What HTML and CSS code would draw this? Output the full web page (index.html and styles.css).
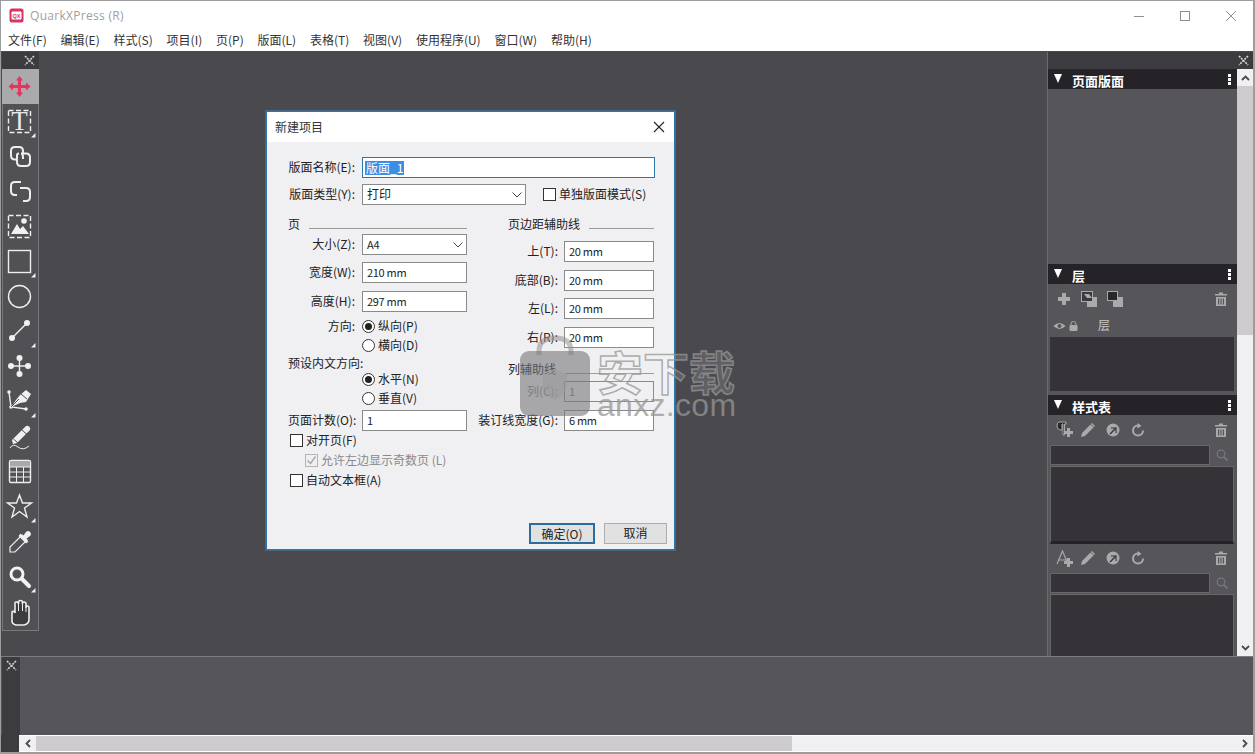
FILE: index.html
```html
<!DOCTYPE html>
<html lang="zh">
<head>
<meta charset="utf-8">
<title>QuarkXPress (R)</title>
<link rel="stylesheet" href="styles.css">
</head>
<body>
<div class="window">
  <header class="titlebar">
    <svg class="applogo" width="15" height="15" viewBox="0 0 15 15"><rect x="0.5" y="0.5" width="14" height="14" rx="2.500" fill="#dc3263"/><rect x="2.500" y="3.500" width="10" height="8" rx="1" fill="#fff"/><text x="7.500" y="9.800" class="logotext">QX</text></svg>
    <span class="apptitle">QuarkXPress (R)</span>
    <div class="winbtns">
      <svg width="12" height="12" viewBox="0 0 12 12"><path d="M1 6.500H11" class="winstroke"/></svg>
      <svg width="12" height="12" viewBox="0 0 12 12"><rect x="1.500" y="1.500" width="9" height="9" class="winstroke"/></svg>
      <svg width="12" height="12" viewBox="0 0 12 12"><path d="M1 1L11 11M11 1L1 11" class="winstroke"/></svg>
    </div>
  </header>
  <nav class="menubar">
    <span>文件(F)</span><span>编辑(E)</span><span>样式(S)</span><span>项目(I)</span><span>页(P)</span><span>版面(L)</span><span>表格(T)</span><span>视图(V)</span><span>使用程序(U)</span><span>窗口(W)</span><span>帮助(H)</span>
  </nav>

  <main class="workarea">
    <aside class="toolbox">
      <div class="toolhead"><svg class="closex" width="11" height="11" viewBox="0 0 11 11"><path d="M1 1L10 10M10 1L1 10"/></svg></div>
      <div class="tool tool-active"><svg width="37" height="35" viewBox="0 0 37 35"><path d="M17.500 7L21 11.500H19V16H24V13.500L28.500 17.500L24 21.500V19H19V23.500H21L17.500 28L14 23.500H16V19H11V21.500L6.500 17.500L11 13.500V16H16V11.500H14Z" fill="#e0365f"/></svg></div>
      <div class="tool"><svg width="37" height="35" viewBox="0 0 37 35"><rect x="6.500" y="6.500" width="22" height="22" class="ts dash"/><text x="17.500" y="26" class="ticon">T</text><path d="M29 33.500H33.500V29Z" class="tf"/></svg></div>
      <div class="tool"><svg width="37" height="35" viewBox="0 0 37 35"><path d="M14 20.500H13Q9 20.500 9 16.500V12Q9 8 13 8H17Q21 8 21 12V14" class="ts2"/><path d="M21 20V18.500Q21 14.500 19 14.500H24Q28 14.500 28 18.500V23Q28 27 24 27H19Q15 27 15 23V16Q15 14.500 17 14.500" class="ts2"/></svg></div>
      <div class="tool"><svg width="37" height="35" viewBox="0 0 37 35"><path d="M19 8H13Q9 8 9 12V17Q9 21 13 21H15" class="ts2"/><path d="M18 14H24Q28 14 28 18V23Q28 27 24 27H21" class="ts2"/></svg></div>
      <div class="tool"><svg width="37" height="35" viewBox="0 0 37 35"><rect x="6.500" y="6.500" width="22" height="22" class="ts dash"/><circle cx="22" cy="12" r="2.800" class="tf"/><path d="M9 25L15 15L18 20L21 17L27 25Z" class="tf"/></svg></div>
      <div class="tool"><svg width="37" height="35" viewBox="0 0 37 35"><rect x="6.500" y="6.500" width="22" height="22" class="ts"/><path d="M29 33.500H33.500V29Z" class="tf"/></svg></div>
      <div class="tool"><svg width="37" height="35" viewBox="0 0 37 35"><circle cx="17.500" cy="17.500" r="11" class="ts"/></svg></div>
      <div class="tool"><svg width="37" height="35" viewBox="0 0 37 35"><path d="M10 24L25 9" class="ts"/><circle cx="10" cy="24" r="3" class="tf"/><circle cx="25" cy="9" r="3" class="tf"/><path d="M29 33.500H33.500V29Z" class="tf"/></svg></div>
      <div class="tool"><svg width="37" height="35" viewBox="0 0 37 35"><path d="M9 17H26M17.500 9V25" class="ts"/><circle cx="9" cy="17" r="3" class="tf"/><circle cx="26" cy="17" r="3" class="tf"/><circle cx="17.500" cy="9" r="3" class="tf"/><circle cx="17.500" cy="25" r="3" class="tf"/></svg></div>
      <div class="tool"><svg width="37" height="35" viewBox="0 0 37 35"><path d="M7 8L9 23L24 25" class="ts"/><circle cx="7" cy="8" r="1.800" class="tf"/><circle cx="9" cy="23" r="1.800" class="tf"/><circle cx="24" cy="25" r="1.800" class="tf"/><path d="M9 23L18 19L24 18L29 10L24 6L18 11L14 16Z" class="tf"/><path d="M9 23L17 15" stroke="#4f4e52" stroke-width="1"/><path d="M19 10L25 15" stroke="#4f4e52" stroke-width="1"/><path d="M29 33.500H33.500V29Z" class="tf"/></svg></div>
      <div class="tool"><svg width="37" height="35" viewBox="0 0 37 35"><path d="M10 21L11 25L15 24L28 11Q29 9 27 7.500Q25 6 23 8Z" class="tf"/><path d="M20 11L25 15.500M11.500 20L16 24" stroke="#4f4e52" stroke-width="1"/><path d="M8 29Q11 24 16 28T27 27" class="ts thin"/></svg></div>
      <div class="tool"><svg width="37" height="35" viewBox="0 0 37 35"><rect x="7.500" y="6.500" width="21" height="22" rx="1.500" class="ts"/><rect x="8" y="7" width="20" height="6" fill="#a9a8ab"/><path d="M7.500 13H28.500M7.500 18H28.500M7.500 23H28.500M14.500 13V28.500M21.500 13V28.500" class="ts thin"/></svg></div>
      <div class="tool"><svg width="37" height="35" viewBox="0 0 37 35"><path d="M17.500 6L20.500 14H29.500L22.500 19L25 28L17.500 22.500L10 28L12.500 19L5.500 14H14.500Z" class="ts"/><path d="M29 33.500H33.500V29Z" class="tf"/></svg></div>
      <div class="tool"><svg width="37" height="35" viewBox="0 0 37 35"><path d="M20 11L25 16L13 28H8V23Z" class="ts thinish"/><path d="M18.500 9.500L21 12L24 8Q26 6 28 8T28 12L24 15L26.500 17.500L24 19.500L16.500 12Z" class="tf"/></svg></div>
      <div class="tool"><svg width="37" height="35" viewBox="0 0 37 35"><circle cx="15" cy="15" r="6" class="ts3"/><path d="M20 20L27 27" class="ts4"/><path d="M29 33.500H33.500V29Z" class="tf"/></svg></div>
      <div class="tool"><svg width="37" height="35" viewBox="0 0 37 35"><path d="M10 18V27Q10 30 14 31H22Q27 30 27 25V14Q27 12 25.500 12T24 14V10Q24 8 22 8T20.500 10V8.500Q20.500 6.500 18.500 6.500T16.500 8.500V10Q16.500 8 14.500 8T13 10V19Q11.500 16 10 18Z" class="ts hand"/><path d="M16.500 10V17M20.500 10V17M24 14V18" class="ts thin"/></svg></div>
    </aside>

    <section class="canvas">
      <div class="dialog">
        <div class="dlg-title">
          <span>新建项目</span>
          <svg width="12" height="12" viewBox="0 0 12 12"><path d="M1 1L11 11M11 1L1 11" class="dlgx"/></svg>
        </div>
        <div class="dlg-body">
          <div class="row row-name">
            <label class="lab lab-l">版面名称(E):</label>
            <div class="field field-focus field-wide"><span class="sel">版面_1</span></div>
          </div>
          <div class="row row-type">
            <label class="lab lab-l">版面类型(Y):</label>
            <div class="field field-select field-type"><span class="bigger">打印</span><svg class="chev" width="10" height="6" viewBox="0 0 10 6"><path d="M0.500 0.500L5 5L9.500 0.500"/></svg></div>
            <span class="box box-single"></span><span class="opt">单独版面模式(S)</span>
          </div>

          <div class="cols">
            <div class="col-left">
              <div class="heading"><span>页</span><i class="rule"></i></div>
              <div class="row"><label class="lab lab-l">大小(Z):</label><div class="field field-select field-l"><span>A4</span><svg class="chev" width="10" height="6" viewBox="0 0 10 6"><path d="M0.500 0.500L5 5L9.500 0.500"/></svg></div></div>
              <div class="row"><label class="lab lab-l">宽度(W):</label><div class="field field-l">210 mm</div></div>
              <div class="row"><label class="lab lab-l">高度(H):</label><div class="field field-l">297 mm</div></div>
              <div class="row"><label class="lab lab-l">方向:</label><span class="radio radio-on"></span><span class="opt">纵向(P)</span></div>
              <div class="row"><label class="lab lab-l"></label><span class="radio"></span><span class="opt">横向(D)</span></div>
              <div class="row"><span class="plain">预设内文方向:</span></div>
              <div class="row"><label class="lab lab-l"></label><span class="radio radio-on"></span><span class="opt">水平(N)</span></div>
              <div class="row"><label class="lab lab-l"></label><span class="radio"></span><span class="opt">垂直(V)</span></div>
              <div class="row"><label class="lab lab-l">页面计数(O):</label><div class="field field-l">1</div></div>
              <div class="row row-check"><span class="box"></span><span class="opt">对开页(F)</span></div>
              <div class="row row-check row-sub"><span class="box box-off"><svg width="11" height="11" viewBox="0 0 11 11"><path d="M1.500 5.500L4.500 8.500L9.500 1.500"/></svg></span><span class="opt opt-off">允许左边显示奇数页 (L)</span></div>
              <div class="row row-check"><span class="box"></span><span class="opt">自动文本框(A)</span></div>
            </div>
            <div class="col-right">
              <div class="heading heading-r"><span>页边距辅助线</span><i class="rule"></i></div>
              <div class="row"><label class="lab lab-r">上(T):</label><div class="field field-r">20 mm</div></div>
              <div class="row"><label class="lab lab-r">底部(B):</label><div class="field field-r">20 mm</div></div>
              <div class="row"><label class="lab lab-r">左(L):</label><div class="field field-r">20 mm</div></div>
              <div class="row"><label class="lab lab-r">右(R):</label><div class="field field-r">20 mm</div></div>
              <div class="heading heading-r"><span>列辅助线</span><i class="rule"></i></div>
              <div class="row"><label class="lab lab-r lab-off">列(C):</label><div class="field field-r field-off">1</div></div>
              <div class="row"><label class="lab lab-r">装订线宽度(G):</label><div class="field field-r">6 mm</div></div>
            </div>
          </div>

          <div class="dlg-foot">
            <button class="btn btn-main">确定(O)</button>
            <button class="btn">取消</button>
          </div>
        </div>
      </div>
    </section>

    <aside class="rpanel">
      <div class="rhead"><svg class="closex" width="11" height="11" viewBox="0 0 11 11"><path d="M1 1L10 10M10 1L1 10"/></svg></div>
      <div class="rmain">
        <div class="rbody">
          <div class="sechead"><span class="tri"></span><span class="sectitle">页面版面</span><span class="dots"></span></div>
          <div class="sec-pages"></div>

          <div class="sechead"><span class="tri"></span><span class="sectitle">层</span><span class="dots"></span></div>
          <div class="iconrow iconrow-layer">
            <svg width="14" height="14" viewBox="0 0 14 14"><path d="M5 1H9V5H13V9H9V13H5V9H1V5H5Z" class="pf"/></svg>
            <svg width="16" height="16" viewBox="0 0 16 16"><rect x="6" y="6" width="10" height="10" class="pf"/><rect x="0.500" y="0.500" width="11" height="10" fill="#3a393d" stroke="#aaa9ac"/><path d="M3 3H8L11 7H6Z" class="pf"/></svg>
            <svg width="16" height="16" viewBox="0 0 16 16"><rect x="6" y="6" width="10" height="10" class="pf"/><rect x="0.500" y="0.500" width="10" height="9" fill="#29272b" stroke="#aaa9ac"/></svg>
            <svg class="push-right" width="12" height="14" viewBox="0 0 12 14"><use href="#trash"/></svg>
          </div>
          <div class="layerhead">
            <svg width="13" height="8" viewBox="0 0 12 8"><path d="M0 4Q6 -2 12 4Q6 10 0 4Z" class="pf"/><circle cx="6" cy="4" r="2" fill="#565559"/></svg>
            <svg width="9" height="10" viewBox="0 0 9 10"><path d="M2 4V3Q2 0.500 4.500 0.500T7 3V4" fill="none" stroke="#aaa9ac"/><rect x="0.500" y="4" width="8" height="6" rx="1" class="pf"/></svg>
            <span class="layername">层</span>
          </div>
          <div class="list list-layers"></div>

          <div class="sechead"><span class="tri"></span><span class="sectitle">样式表</span><span class="dots"></span></div>
          <div class="iconrow iconrow-style">
            <svg class="first-ic" width="17" height="17" viewBox="0 0 17 17"><path d="M3 1H10V3H8.500V14H7V3H6V9H4.500Q0.500 8 1 5Q1 1.500 3 1Z" fill="#29272b" stroke="#aaa9ac"/><path d="M11 7H14V10H17V13H14V16H11V13H8V10H11Z" class="pf"/></svg>
            <svg width="14" height="14" viewBox="0 0 14 14"><path d="M0 14L1 10L9.500 1.500L12.500 4.500L4 13Z" class="pf"/><path d="M10.500 0.500L13.500 3.500" class="pl"/></svg>
            <svg width="14" height="14" viewBox="0 0 14 14"><circle cx="7" cy="7" r="6.500" class="pf"/><path d="M5 5H10V10" fill="none" stroke="#565559" stroke-width="1.500"/><path d="M10 5L4 11" stroke="#39373b" stroke-width="1.500"/></svg>
            <svg width="14" height="14" viewBox="0 0 14 14"><path d="M7 2.500A5 5 0 1 0 12 7.500" fill="none" stroke="#aaa9ac" stroke-width="2"/><path d="M6.500 0L10.500 2.800L6.500 5.500Z" class="pf"/></svg>
            <svg class="push-right" width="12" height="14" viewBox="0 0 12 14"><use href="#trash"/></svg>
          </div>
          <div class="searchrow"><div class="searchbox"></div><svg width="12" height="12" viewBox="0 0 12 12"><use href="#lens"/></svg></div>
          <div class="list list-style1"></div>
          <div class="iconrow iconrow-style iconrow-char">
            <svg class="first-ic" width="17" height="17" viewBox="0 0 17 17"><path d="M1 14L6.500 1L12 14M3 10H10" fill="none" stroke="#aaa9ac" stroke-width="1.200"/><path d="M11 8H14V11H17V14H14V17H11V14H8V11H11Z" class="pf"/></svg>
            <svg width="14" height="14" viewBox="0 0 14 14"><path d="M0 14L1 10L9.500 1.500L12.500 4.500L4 13Z" class="pf"/><path d="M10.500 0.500L13.500 3.500" class="pl"/></svg>
            <svg width="14" height="14" viewBox="0 0 14 14"><circle cx="7" cy="7" r="6.500" class="pf"/><path d="M5 5H10V10" fill="none" stroke="#565559" stroke-width="1.500"/><path d="M10 5L4 11" stroke="#39373b" stroke-width="1.500"/></svg>
            <svg width="14" height="14" viewBox="0 0 14 14"><path d="M7 2.500A5 5 0 1 0 12 7.500" fill="none" stroke="#aaa9ac" stroke-width="2"/><path d="M6.500 0L10.500 2.800L6.500 5.500Z" class="pf"/></svg>
            <svg class="push-right" width="12" height="14" viewBox="0 0 12 14"><use href="#trash"/></svg>
          </div>
          <div class="searchrow"><div class="searchbox"></div><svg width="12" height="12" viewBox="0 0 12 12"><use href="#lens"/></svg></div>
          <div class="list list-style2"></div>
        </div>
        <div class="vscroll">
          <div class="sbtn"><svg width="9" height="6" viewBox="0 0 9 6"><path d="M1 5L4.500 1.500L8 5" class="arrow"/></svg></div>
          <div class="vthumb"></div>
          <div class="vtrack"></div>
          <div class="sbtn"><svg width="9" height="6" viewBox="0 0 9 6"><path d="M1 1L4.500 4.500L8 1" class="arrow"/></svg></div>
        </div>
      </div>
    </aside>
  </main>

  <section class="bottompanel">
    <div class="bottomstrip"><svg class="closex" width="11" height="11" viewBox="0 0 11 11"><path d="M1 1L10 10M10 1L1 10"/></svg></div>
    <div class="bottomfill"></div>
  </section>
  <div class="hscrollrow">
    <div class="hstrip"></div>
    <div class="hscroll">
      <div class="hbtn"><svg width="6" height="9" viewBox="0 0 6 9"><path d="M5 1L1.500 4.500L5 8" class="arrow"/></svg></div>
      <div class="hthumb"></div>
      <div class="htrack"></div>
      <div class="hbtn"><svg width="6" height="9" viewBox="0 0 6 9"><path d="M1 1L4.500 4.500L1 8" class="arrow"/></svg></div>
    </div>
  </div>

  <div class="watermark">
    <svg width="72" height="82" viewBox="0 0 72 82"><path d="M20 20V16Q20 3 36 3T52 16V20" fill="none" stroke="#8f8f92" stroke-opacity=".55" stroke-width="5"/><rect x="1" y="16" width="70" height="65" rx="9" fill="#77777a" fill-opacity=".6"/><path d="M36 34L48 39V50Q47 60 36 65Q25 60 24 50V39Z" fill="#9a9a9c" fill-opacity=".5"/></svg>
    <div class="wm-text"><div class="wm-cn">安下载</div><div class="wm-en">anxz.com</div></div>
  </div>
</div>

<svg class="defs" width="0" height="0">
  <defs>
    <symbol id="trash" viewBox="0 0 12 14"><path d="M0 2H4V0.500H8V2H12V3.500H0ZM1 5H11V14H1ZM3 6.500V12.500H4.200V6.500ZM5.400 6.500V12.500H6.600V6.500ZM7.800 6.500V12.500H9V6.500Z" fill="#aaa9ac" fill-rule="evenodd"/></symbol>
    <symbol id="lens" viewBox="0 0 12 12"><circle cx="5" cy="5" r="3.800" fill="none" stroke="#77767a" stroke-width="1.300"/><path d="M8 8L11.500 11.500" stroke="#77767a" stroke-width="1.800"/></symbol>
  </defs>
</svg>
</body>
</html>
```
FILE: styles.css
```css
* { box-sizing: border-box; }
html, body { margin: 0; padding: 0; }
body { width: 1255px; height: 754px; overflow: hidden; background: #fff; font-family: "Noto Sans CJK SC", "Noto Sans", sans-serif; font-size: 12px; color: #222; }
.window { position: relative; width: 1255px; height: 754px; border-style: solid; border-color: #9d9d9d; border-width: 1px 2px 2px 1px; display: flex; flex-direction: column; overflow: hidden; }
.defs { position: absolute; }

.titlebar { height: 29px; flex: none; display: flex; align-items: center; padding-left: 8px; background: #fff; }
.applogo { flex: none; }
.logotext { font-family: "Liberation Sans", sans-serif; font-size: 5.500px; font-weight: 700; fill: #dc3263; text-anchor: middle; }
.apptitle { margin-left: 6px; font-family: "Open Sans", sans-serif; font-size: 12px; letter-spacing: .3px; color: #a0a0a0; }
.winbtns { margin-left: auto; display: flex; gap: 34px; padding-right: 16px; }
.winstroke { fill: none; stroke: #8f8f8f; stroke-width: 1; }

.menubar { height: 21px; flex: none; display: flex; align-items: center; gap: 13.800px; padding: 0 0 2px 7px; background: #fff; font-size: 12px; color: #333; }

.workarea { height: 605px; flex: none; display: flex; background: #4a494e; }
.toolbox { width: 37px; height: 579px; margin: 1px 0 0 1px; flex: none; border: 1px solid #79787c; border-top: 0; background: #515054; }
.toolhead { height: 17px; margin: 0 -1px; background: #3c3b3f; display: flex; justify-content: flex-end; align-items: center; padding-right: 4px; }
.closex { fill: none; stroke: #d6d6d6; stroke-width: 1.600; stroke-dasharray: 2 1; display: block; }
.tool { height: 35px; margin-left: -1px; margin-right: -1px; }
.tool svg { display: block; }
.tool-active { background: #aaa9ab; }
.ts { fill: none; stroke: #eeeeee; stroke-width: 1.400; }
.dash { stroke-dasharray: 5 2.500; }
.thin { stroke-width: 1; }
.thinish { stroke-width: 1.200; }
.hand { stroke-width: 1.600; fill: #3c3b3f; }
.ts2 { fill: none; stroke: #eeeeee; stroke-width: 2; }
.ts3 { fill: none; stroke: #f2f2f2; stroke-width: 3; }
.ts4 { fill: none; stroke: #f2f2f2; stroke-width: 4; stroke-linecap: round; }
.tf { fill: #f0f0f0; }
.ticon { font-family: "Liberation Serif", serif; font-size: 27px; fill: #e8e8e8; text-anchor: middle; }

.canvas { position: relative; flex: 1; }
.dialog { position: absolute; left: 227px; top: 60px; width: 409px; height: 439px; border: 1px solid #2f76a8; box-shadow: 0 0 0 1px rgba(60, 130, 180, .55); background: #f0eff2; display: flex; flex-direction: column; }
.dlg-title { height: 30px; flex: none; background: #fff; display: flex; align-items: center; justify-content: space-between; padding: 0 9px 0 8px; font-size: 12px; color: #333; }
.dlg-title span { padding-bottom: 2px; }
.dlgx { fill: none; stroke: #222; stroke-width: 1.100; }
.dlg-body { flex: 1; display: flex; flex-direction: column; padding: 15px 7px 5px 21px; font-size: 12px; color: #222; }

.row { display: flex; align-items: center; }
.row-name { height: 21px; }
.row-type { height: 21px; margin-top: 6px; }
.lab { flex: none; text-align: right; white-space: nowrap; padding-bottom: 2px; }
.lab-l { width: 67px; margin-right: 7px; }
.lab-r { width: 80px; margin-right: 6px; }
.lab-off { color: #8a8a8a; }
.plain { white-space: nowrap; padding-bottom: 2px; }
.field { height: 21px; flex: none; border: 1px solid #8a8a8a; background: #fff; display: flex; align-items: center; padding: 0 0 2px 4px; font-size: 11px; letter-spacing: -.3px; color: #222; }
.field-wide { width: 293px; padding-left: 2px; border-color: #2f76a8; }
.field-focus { font-size: 12px; letter-spacing: 0; padding-bottom: 0; }
.sel { background: #3a8ee6; color: #fff; padding: 0 1px; line-height: 14px; }
.field-type { width: 164px; }
.field-l { width: 105px; }
.field-r { width: 90px; }
.field-off { background: #f0eff2; color: #777; }
.field-select { position: relative; }
.bigger { font-size: 12px; letter-spacing: 0; }
.chev { position: absolute; right: 3px; top: 7px; fill: none; stroke: #444; stroke-width: 1; }
.box { width: 13px; height: 13px; flex: none; border: 1px solid #333; background: #fff; display: block; }
.box-single { margin-left: 17px; }
.box-off { border-color: #b5b5b5; background: #efeef0; }
.box-off svg { display: block; fill: none; stroke: #a5a5a5; stroke-width: 1.300; }
.opt { margin-left: 3px; white-space: nowrap; padding-bottom: 2px; }
.opt-off { color: #8a8a8a; }
.radio { width: 13px; height: 13px; flex: none; border: 1px solid #333; border-radius: 50%; background: #fff; display: flex; align-items: center; justify-content: center; }
.radio-on::after { content: ""; width: 7px; height: 7px; border-radius: 50%; background: #222; }

.cols { display: flex; gap: 11px; }
.col-left { display: grid; width: 179px; align-items: start; grid-template-rows: 18px 28px 29px 25px 19px 18px 16px 19px 22px 20px 20px 20px 20px; margin-top: 11px; }
.col-left > .row { min-height: 20px; }
.col-right { display: grid; width: 176px; align-items: start; grid-template-rows: 25px 29px 28px 29px 34px 20px 29px 21px; margin-top: 11px; }
.heading { display: flex; align-items: flex-start; height: 18px; line-height: 16px; }
.heading .rule { flex: 1; height: 1px; background: #9b9b9b; margin: 12px 0 0 9px; }
.heading-r { padding-left: 30px; }
.row-check { padding-left: 2px; }
.row-sub { padding-left: 17px; }

.dlg-foot { margin-top: auto; display: flex; justify-content: flex-end; gap: 9px; }
.btn { font: inherit; font-size: 12px; color: #222; width: 63px; height: 21px; padding: 0 0 2px; border: 1px solid #adadad; background: #e1e1e1; }
.btn-main { width: 66px; border: 2px solid #2b6d9f; }

.rpanel { width: 206px; flex: none; margin-top: 1px; border-left: 1px solid #6b6a6e; display: flex; flex-direction: column; background: #565559; }
.rhead { height: 17px; flex: none; background: #3c3b3f; display: flex; justify-content: flex-end; align-items: center; padding-right: 4px; }
.rmain { flex: 1; min-height: 0; display: flex; }
.rbody { width: 189px; flex: none; display: flex; flex-direction: column; overflow: hidden; }
.sechead { height: 20px; flex: none; background: #252327; display: flex; padding-left: 6px; position: relative; color: #fff; }
.tri { width: 0; height: 0; margin-top: 5px; border-left: 4.500px solid transparent; border-right: 4.500px solid transparent; border-top: 9px solid #fff; flex: none; }
.sectitle { margin-left: 10px; font-size: 13px; font-weight: 700; line-height: 14px; padding-top: 5px; white-space: nowrap; }
.dots { position: absolute; right: 6px; top: 5px; width: 3px; height: 11px; background: repeating-linear-gradient(#fff 0 3px, transparent 3px 4px); }
.sec-pages { height: 175px; flex: none; }
.iconrow { flex: none; display: flex; align-items: center; padding: 0 10px 0 10px; }
.iconrow svg { display: block; flex: none; }
.push-right { margin-left: auto; }
.iconrow-layer { height: 30px; gap: 10px; padding-left: 9px; }
.layerhead { height: 23px; flex: none; display: flex; align-items: center; gap: 3px; padding-left: 5px; }
.layername { margin-left: 17px; padding-bottom: 2px; color: #c8c8c8; }
.list { flex: none; background: #353337; margin: 0 3px 0 2px; }
.list-layers { height: 54px; margin-bottom: 4px; }
.iconrow-style { height: 29px; gap: 11px; padding-left: 8px; }
.first-ic { margin-right: -3px; }
.searchrow { height: 22px; flex: none; display: flex; align-items: center; padding-left: 2px; }
.searchbox { width: 160px; height: 20px; background: #353337; border: 1px solid #676669; }
.searchrow svg { margin-left: 6px; display: block; }
.list-style1 { box-sizing: content-box; height: 74px; border: 1px solid #676669; border-bottom: 3px solid #252327; }
.iconrow-char { height: 28px; }
.list-style2 { flex: 1; border: 1px solid #676669; border-bottom: 0; }
.vscroll { width: 16px; flex: none; display: flex; flex-direction: column; background: #f0eff2; }
.sbtn { height: 17px; flex: none; display: flex; align-items: center; justify-content: center; }
.vthumb { height: 249px; flex: none; background: #cdcbce; }
.vtrack { flex: 1; }
.arrow { fill: none; stroke: #4a494e; stroke-width: 1.800; }

.bottompanel { height: 79px; flex: none; border-top: 1px solid #7d7c80; display: flex; background: #565559; }
.bottomstrip { width: 18px; flex: none; margin-left: 1px; background: #3c3b3f; display: flex; justify-content: center; padding-top: 3px; }
.bottomfill { flex: 1; }
.hscrollrow { height: 17px; flex: none; display: flex; background: #3c3b3f; }
.hstrip { width: 18px; flex: none; }
.hscroll { flex: 1; display: flex; background: #f0eff2; border-top: 1px solid #fff; border-bottom: 1px solid #fff; }
.hbtn { width: 17px; flex: none; display: flex; align-items: center; justify-content: center; }
.hthumb { width: 756px; flex: none; background: #cdcbce; }
.htrack { flex: 1; }

.watermark { position: absolute; left: 518px; top: 334px; display: flex; gap: 6px; pointer-events: none; }
.watermark svg { display: block; flex: none; }
.wm-text { margin-top: 12px; }
.wm-cn { font-size: 46px; line-height: 46px; font-weight: 700; color: rgba(255, 255, 255, .12); -webkit-text-stroke: 1.500px rgba(150, 150, 150, .75); white-space: nowrap; }
.wm-en { font-family: "Liberation Sans", sans-serif; font-size: 32px; line-height: 24px; letter-spacing: .3px; color: rgba(150, 150, 150, .75); white-space: nowrap; }

.pf { fill: #aaa9ac; }
.pl { stroke: #aaa9ac; stroke-width: 1.500; fill: none; }
```
